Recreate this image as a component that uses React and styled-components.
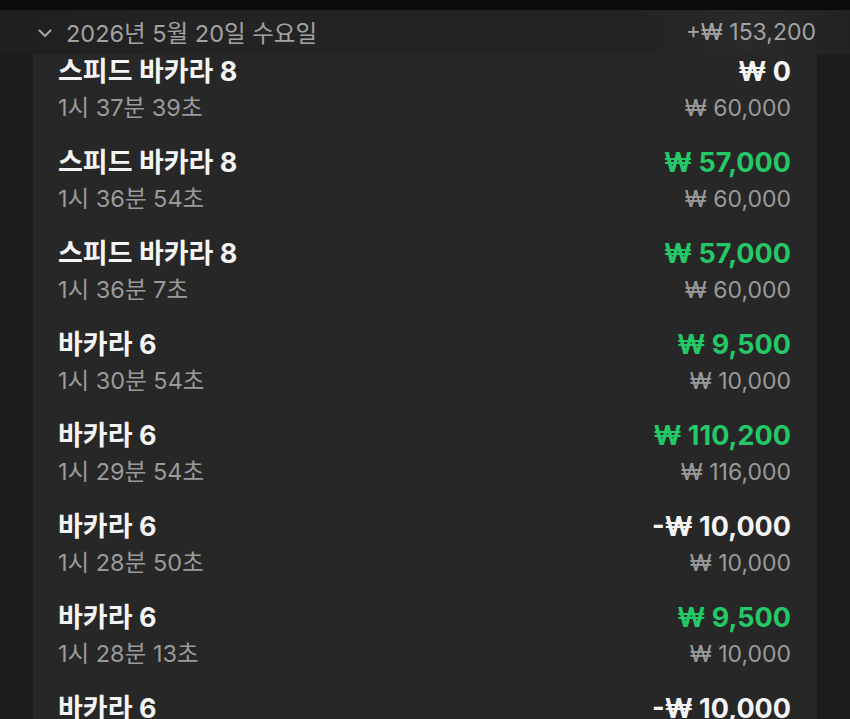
import React from "react";
import styled, { createGlobalStyle } from "styled-components";

const GlobalStyle = createGlobalStyle`
	html, body {
		margin: 0;
		padding: 0;
		background: #1c1c1c;
		font-family: Inter, "Noto Sans CJK KR", sans-serif;
	}
`;

const Page = styled.div`
	height: 719px;
	overflow: hidden;
	background: #1c1c1c;
`;

const TopBar = styled.div`
	height: 10px;
	background: #0b0b0b;
`;

const DayHeader = styled.div`
	height: 44px;
	display: flex;
	align-items: center;
	justify-content: space-between;
	padding: 0 34px 0 37px;
	background: linear-gradient(90deg, #1f1f1f 0%, #232323 20%, #232323 75%, #2a2a2a 88%, #222 100%);
	color: #a3a3a3;
	font-size: 23px;
`;

const DayTitle = styled.div`
	display: flex;
	align-items: center;
	gap: 13px;
	font-size: 23.5px;
`;

const Chevron = styled.svg`
	width: 16px;
	height: 16px;
	margin-top: 2px;
`;

const List = styled.div`
	margin: 0 33px;
	background: #272727;
	padding: 0 26px 0 25px;
`;

const Row = styled.div`
	display: grid;
	grid-template-columns: 1fr auto;
	padding-bottom: 19px;
`;

const Title = styled.div`
	font-size: 27px;
	font-weight: 700;
	line-height: 36px;
	color: #f4f4f4;
`;

const Amount = styled.div`
	font-size: 27px;
	font-weight: 700;
	line-height: 36px;
	text-align: right;
	color: ${(p) => (p.$win ? "#25c866" : "#f4f4f4")};
`;

const Sub = styled.div`
	font-size: 23.5px;
	line-height: 36px;
	color: #9a9a9a;
`;

const Stake = styled(Sub)`
	font-size: 23px;
	text-align: right;
`;

const rounds = [
	{ game: "스피드 바카라 8", time: "1시 37분 39초", win: "₩ 0", bet: "₩ 60,000" },
	{ game: "스피드 바카라 8", time: "1시 36분 54초", win: "₩ 57,000", bet: "₩ 60,000", green: true },
	{ game: "스피드 바카라 8", time: "1시 36분 7초", win: "₩ 57,000", bet: "₩ 60,000", green: true },
	{ game: "바카라 6", time: "1시 30분 54초", win: "₩ 9,500", bet: "₩ 10,000", green: true },
	{ game: "바카라 6", time: "1시 29분 54초", win: "₩ 110,200", bet: "₩ 116,000", green: true },
	{ game: "바카라 6", time: "1시 28분 50초", win: "-₩ 10,000", bet: "₩ 10,000" },
	{ game: "바카라 6", time: "1시 28분 13초", win: "₩ 9,500", bet: "₩ 10,000", green: true },
	{ game: "바카라 6", time: "1시 27분 40초", win: "-₩ 10,000", bet: "₩ 10,000" },
];

export default function App() {
	return (
		<Page>
			<GlobalStyle />
			<TopBar />
			<DayHeader>
				<DayTitle>
					<Chevron viewBox="0 0 16 16" fill="none" stroke="#a3a3a3" strokeWidth="2.2" strokeLinecap="round" strokeLinejoin="round">
						<path d="M2.5 5.5 L8 11 L13.5 5.5" />
					</Chevron>
					2026년 5월 20일 수요일
				</DayTitle>
				<div>+₩ 153,200</div>
			</DayHeader>
			<List>
				{rounds.map((r, i) => (
					<Row key={i}>
						<Title>{r.game}</Title>
						<Amount $win={r.green}>{r.win}</Amount>
						<Sub>{r.time}</Sub>
						<Stake>{r.bet}</Stake>
					</Row>
				))}
			</List>
		</Page>
	);
}
